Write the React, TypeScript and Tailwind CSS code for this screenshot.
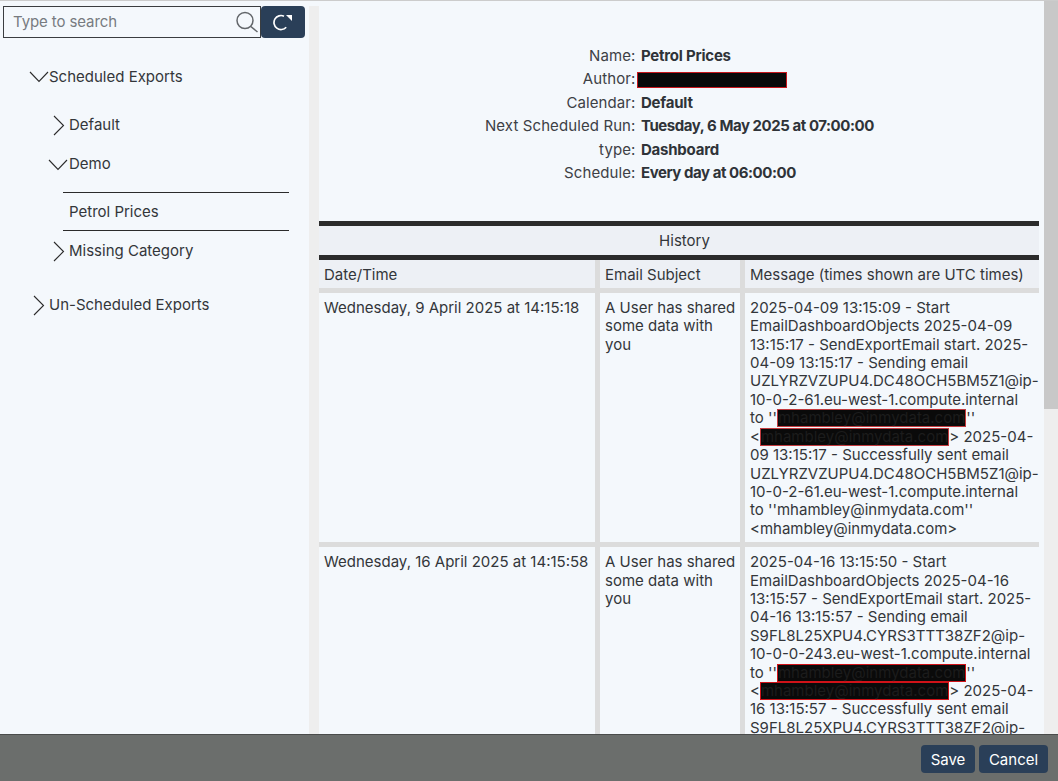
const chevDown = (
  <svg width="20" height="12" viewBox="0 0 20 12" fill="none" stroke="#2b2b2b" strokeWidth="1.1" className="shrink-0">
    <path d="M1 1 L10 10.5 L19 1" />
  </svg>
);

const chevRight = (
  <svg width="12" height="21" viewBox="0 0 12 21" fill="none" stroke="#2b2b2b" strokeWidth="1.1" className="shrink-0">
    <path d="M1 1 L10.5 10.5 L1 20" />
  </svg>
);

function Redacted({ children, bright }: { children: React.ReactNode; bright?: boolean }) {
  return (
    <span
      className={
        bright
          ? "inline-block h-[18px] align-top border border-[#d01218] bg-[#0a0a0a] leading-[15px] text-[#1c1c1c]"
          : "inline-block h-[18px] align-top border border-[#c23a3e] bg-[#0a0a0a] leading-[15px] text-[#1c1c1c]"
      }
    >
      {children}
    </span>
  );
}

function Info({ label, value, tight }: { label: string; value: React.ReactNode; tight?: boolean }) {
  return (
    <div className="flex h-[23.4px] items-center">
      <div className="w-[316.5px] text-right tracking-[0.1px] text-[#3d4045]">{label}:</div>
      <div className={tight ? "pl-[5.5px] font-bold tracking-[-0.45px] text-[#2f3338]" : "pl-[5.5px] font-bold tracking-[-0.23px] text-[#2f3338]"}>
        {value}
      </div>
    </div>
  );
}

function Message({ start, sent, id, host, bright }: { start: string; sent: string; id: string; host: string; bright?: boolean }) {
  return (
    <>
      {start} - Start EmailDashboardObjects {sent} - SendExportEmail start. {sent} - Sending email {id}@ip-{host}.eu-west-1.compute.internal to ''
      <Redacted bright={bright}>mhambley@inmydata.com</Redacted>''
      <br />
      &lt;<Redacted bright={bright}>mhambley@inmydata.com</Redacted>&gt; {sent} - Successfully sent email {id}@ip-{host}.eu-west-1.compute.internal to ''mhambley@inmydata.com'' &lt;mhambley@inmydata.com&gt;
    </>
  );
}

const cell = "bg-[#f4f8fc] px-[5px] pt-[6px] pb-[4px]";
const headCell = "flex h-[28px] items-center bg-[#edf0f5] px-[5px] pt-[2px]";

export default function App() {
  return (
    <div className="flex h-[781px] w-[1058px] flex-col overflow-hidden bg-[#f4f8fc] text-[15px] leading-[18.4px] text-[#33363a] [font-family:Inter,sans-serif]">
      <div className="h-[1px] shrink-0 bg-[#cccccc]" />
      <div className="flex min-h-0 flex-1">
        <aside className="w-[309px] shrink-0 pt-[5px] pl-[3px]">
          <div className="flex h-[32px]">
            <div className="flex w-[258px] items-center justify-between border border-[#3a3d40] pt-[1px] pl-[9px] tracking-[-0.1px] text-[#777b80]">
              Type to search
              <svg width="24" height="24" viewBox="0 0 24 24" fill="none" stroke="#62666a" strokeWidth="1.5" className="mr-[1px] mb-[1px] shrink-0">
                <circle cx="10" cy="10.5" r="8" />
                <path d="M15.8 16.5 L22.5 22" />
              </svg>
            </div>
            <button className="flex w-[44px] items-center justify-center rounded-[4px] bg-[#2a3f58]">
              <svg width="20" height="20" viewBox="0 0 20 20" fill="none" stroke="#ffffff" strokeWidth="1.7">
                <path d="M13.2 15.2 A7 7 0 1 1 11 4.2" />
                <path d="M13 3 H19 V9 Z" fill="#ffffff" stroke="none" />
              </svg>
            </button>
          </div>
          <div className="pt-[29px] pl-[26px]">
            <div className="flex h-[20px] items-center">
              {chevDown}
              <span>Scheduled Exports</span>
            </div>
            <div className="mt-[28px] ml-[24px] flex h-[21px] items-center gap-[4px]">
              {chevRight}
              <span>Default</span>
            </div>
            <div className="mt-[18px] ml-[19px] flex h-[21px] items-center gap-[1px]">
              {chevDown}
              <span>Demo</span>
            </div>
            <div className="mt-[17px] ml-[34px] flex h-[39px] w-[226px] items-center border-y border-[#2b2b2b] pt-[2px] pl-[6px]">
              Petrol Prices
            </div>
            <div className="mt-[10px] ml-[24px] flex h-[21px] items-center gap-[4px]">
              {chevRight}
              <span>Missing Category</span>
            </div>
            <div className="mt-[33px] ml-[4px] flex h-[21px] items-center gap-[4px]">
              {chevRight}
              <span>Un-Scheduled Exports</span>
            </div>
          </div>
        </aside>
        <div className="mt-[5px] w-[10px] shrink-0 bg-[#eeeeee]" />
        <main className="w-[720px] min-w-0 shrink-0">
          <div className="pt-[43.5px] pb-[36px]">
            <Info label="Name" value="Petrol Prices" />
            <Info
              label="Author"
              value={<span className="-ml-[4.5px] block h-[16px] w-[150px] border border-[#c8161c] bg-[#0a0a0a]" />}
            />
            <Info label="Calendar" value="Default" />
            <Info label="Next Scheduled Run" value="Tuesday, 6 May 2025 at 07:00:00" tight />
            <Info label="type" value="Dashboard" />
            <Info label="Schedule" value="Every day at 06:00:00" tight />
          </div>
          <div className="flex h-[39px] items-center justify-center border-y-[5px] border-[#2b2b2b] bg-[#edf0f5] pt-[2px] pl-[11px]">
            History
          </div>
          <div className="grid grid-cols-[276px_140px_294px] gap-[5px] bg-[#dcdcdc]">
            <div className={headCell}>Date/Time</div>
            <div className={headCell}>Email Subject</div>
            <div className={headCell}>Message (times shown are UTC times)</div>
            <div className={cell}>Wednesday, 9 April 2025 at 14:15:18</div>
            <div className={`${cell} !pr-0`}>A User has shared some data with you</div>
            <div className={cell}>
              <Message start="2025-04-09 13:15:09" sent="2025-04-09 13:15:17" id="UZLYRZVZUPU4.DC48OCH5BM5Z1" host="10-0-2-61" />
            </div>
            <div className={cell}>Wednesday, 16 April 2025 at 14:15:58</div>
            <div className={`${cell} !pr-0`}>A User has shared some data with you</div>
            <div className={cell}>
              <Message start="2025-04-16 13:15:50" sent="2025-04-16 13:15:57" id="S9FL8L25XPU4.CYRS3TTT38ZF2" host="10-0-0-243" bright />
            </div>
          </div>
        </main>
        <div className="w-[5px] shrink-0" />
        <div className="w-[14px] shrink-0 bg-[#eeeeee]">
          <div className="h-[408px] bg-[#c8c8c8]" />
        </div>
      </div>
      <footer className="flex h-[47px] shrink-0 items-start justify-end gap-[4px] border-t border-[#4a4c4b] bg-[#6b6e6c] pt-[10px] pr-[10px]">
        <button className="h-[28px] w-[54px] rounded-[4px] bg-[#2a3f58] pt-[2px] text-[15px] text-white">Save</button>
        <button className="h-[28px] w-[69px] rounded-[4px] bg-[#2a3f58] pt-[2px] text-[15px] text-white">Cancel</button>
      </footer>
    </div>
  );
}
